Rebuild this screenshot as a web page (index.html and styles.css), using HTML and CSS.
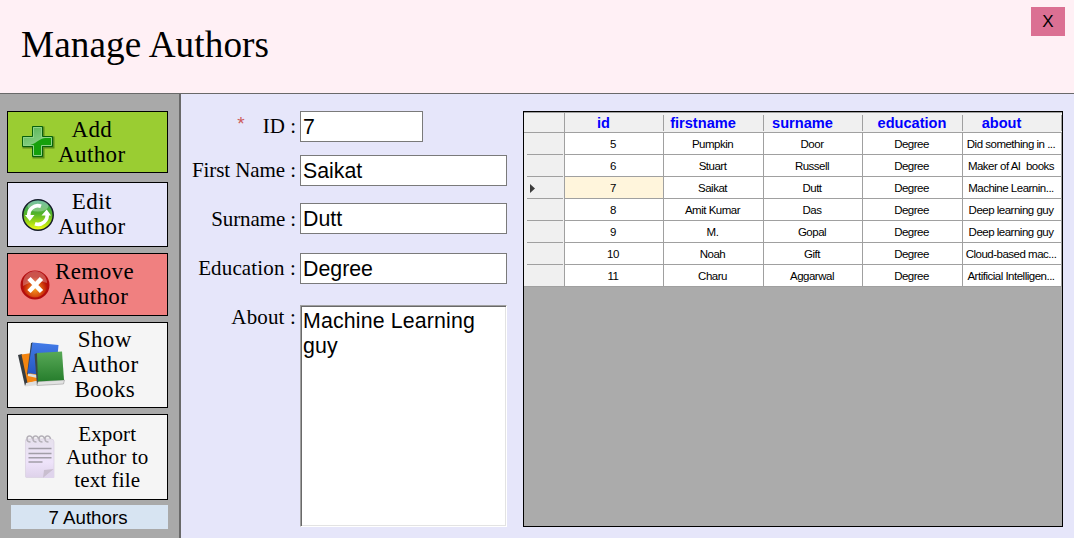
FILE: index.html
```
<!DOCTYPE html>
<html lang="en">
<head>
<meta charset="utf-8">
<title>Manage Authors</title>
<link rel="stylesheet" href="styles.css">
</head>
<body>
<div class="window">
  <header class="header">
    <h1 class="title">Manage Authors</h1>
    <button class="close" type="button">X</button>
  </header>
  <div class="body">
    <nav class="sidebar">
      <button class="action add" type="button">
        <svg class="icon" width="34" height="34" viewBox="0 0 34 34">
          <defs>
            <linearGradient id="plusLight" x1="0" y1="0" x2="0.6" y2="1"><stop offset="0" stop-color="#4fae4f"/><stop offset="1" stop-color="#8fd58a"/></linearGradient>
            <clipPath id="plusClip"><path d="M11.5 1.5h10v10h10v10h-10v10h-10v-10h-10v-10h10z"/></clipPath>
          </defs>
          <path d="M12.5 2.5h10v10h10v10h-10v10h-10v-10h-10v-10h10z" fill="#4c7a16" stroke="#5d8b1c" stroke-width="2"/>
          <path d="M11.500 1.500h10v10h10v10h-10v10h-10v-10h-10v-10h10z" fill="#16a00c"/>
          <path d="M0 0H34V12C22 12 18 15 14 18Q9 21 0 21.500z" fill="url(#plusLight)" clip-path="url(#plusClip)"/>
          <path d="M12.500 2.500h8v10h10v8h-10v10h-8v-10h-10v-8h10z" fill="none" stroke="#8fd488" stroke-width="1"/>
          <path d="M11.500 1.500h10v10h10v10h-10v10h-10v-10h-10v-10h10z" fill="none" stroke="#08600c"/>
        </svg>
        <span class="caption">Add<br>Author</span>
      </button>
      <button class="action edit" type="button">
        <svg class="icon" width="34" height="34" viewBox="0 0 34 34">
          <defs><linearGradient id="ball" x1="0" y1="0" x2="0" y2="1"><stop offset="0" stop-color="#35a37c"/><stop offset=".45" stop-color="#52b32a"/><stop offset=".75" stop-color="#a5dc13"/><stop offset="1" stop-color="#f5ff16"/></linearGradient></defs>
          <circle cx="17" cy="17" r="15.200" fill="url(#ball)" stroke="#161d2a" stroke-width="1.500"/>
          <ellipse cx="17" cy="8" rx="10.500" ry="5.500" fill="#fff" opacity=".3"/>
          <path d="M8 18.500A9 9 0 0 1 20 8.300" fill="none" stroke="#fff" stroke-width="3.600"/>
          <path d="M26 15.500A9 9 0 0 1 14 25.700" fill="none" stroke="#fff" stroke-width="3.600"/>
          <path d="M4 17h9.500l-4.700 6zM20.500 17.500h9.500l-4.300-6z" fill="#fff"/>
        </svg>
        <span class="caption">Edit<br>Author</span>
      </button>
      <button class="action remove" type="button">
        <svg class="icon" width="32" height="32" viewBox="0 0 32 32">
          <defs><radialGradient id="ember" cx=".5" cy=".65" r=".45"><stop offset="0" stop-color="#f49a20"/><stop offset=".6" stop-color="#d95010"/><stop offset="1" stop-color="#b81206"/></radialGradient></defs>
          <circle cx="16" cy="16" r="13.500" fill="url(#ember)" stroke="#b40c0c" stroke-width="2"/>
          <path d="M4 14A12 12 0 0 1 28 14Q16 10 4 17z" fill="#fff" opacity=".28"/>
          <path d="M10 9.500l12.500 13M22.500 9.500L10 22.500" stroke="#fff" stroke-width="4.600"/>
        </svg>
        <span class="caption">Remove<br>Author</span>
      </button>
      <button class="action books" type="button">
        <svg class="icon" width="48" height="46" viewBox="0 0 48 46">
          <defs>
            <linearGradient id="green" x1="0" y1="0" x2="0" y2="1"><stop offset="0" stop-color="#58a957"/><stop offset="1" stop-color="#267d2c"/></linearGradient>
            <linearGradient id="blue" x1="0" y1="0" x2="0" y2="1"><stop offset="0" stop-color="#427be8"/><stop offset="1" stop-color="#2454bd"/></linearGradient>
          </defs>
          <path d="M1 13l4-1 7 28-4 4z" fill="#373c40"/>
          <path d="M4.500 12.500l14-2 5 28-13 2.500z" fill="#f48510"/>
          <path d="M9 41l13-2.500v4.500l-14 1.500z" fill="#dedede"/>
          <path d="M14 1l2-.500-3 31-3 1z" fill="#30435b"/>
          <path d="M15.500 .500l26 2.500-3 32-28-4z" fill="url(#blue)"/>
          <path d="M11 31.500l9 1.500v3l-9-2z" fill="#ddd"/>
          <path d="M17.500 12l3-1 1 28-1.500 4.500z" fill="#3c4744"/>
          <path d="M21 39.500l26.500-1.500-1 4-26.500 1.500z" fill="#e2e2e2" stroke="#777" stroke-width=".4"/>
          <path d="M20 11l25-1.500 2 28.500-26 1.500z" fill="url(#green)"/>
        </svg>
        <span class="caption">Show<br>Author<br>Books</span>
      </button>
      <button class="action export" type="button">
        <svg class="icon" width="30" height="44" viewBox="0 0 30 44">
          <defs><linearGradient id="page" x1="0" y1="0" x2="0" y2="1"><stop offset="0" stop-color="#e6e1ed"/><stop offset=".6" stop-color="#eee3fa"/><stop offset="1" stop-color="#ded2ea"/></linearGradient></defs>
          <path d="M1.500 4H26q3 0 3 3V42.500H1.500q-1 0-1-1V5z" fill="url(#page)" stroke="#d8d0df" stroke-width=".7"/>
          <path d="M18 43l1-8 10-1z" fill="#c9becf"/><path d="M18 43l11-9v9z" fill="#dfd4ec"/>
          <g fill="none" stroke="#b5b1b9" stroke-width="1.500"><path d="M7.500 4Q7 1 4.500 1T2 4t3.500 3M13.500 4Q13 1 10.500 1T8 4t3.500 3M19.500 4Q19 1 16.500 1T14 4t3.500 3M25.500 4Q25 1 22.500 1T20 4t3.500 3"/></g>
          <path d="M3.500 13.500h23M3.500 18.500h23M3.500 22.700h23M3.500 27h14" stroke="#a29ea8" stroke-width="1.500"/>
        </svg>
        <span class="caption">Export<br>Author to<br>text file</span>
      </button>
      <div class="count">7 Authors</div>
    </nav>
    <main class="content">
      <form class="form">
        <div class="field field-id"><label for="id"><span class="required">*</span>ID :</label><input id="id" class="short" value="7"></div>
        <div class="field field-first"><label for="first">First Name :</label><input id="first" value="Saikat"></div>
        <div class="field field-surname"><label for="surname">Surname :</label><input id="surname" value="Dutt"></div>
        <div class="field field-education"><label for="education">Education :</label><input id="education" value="Degree"></div>
        <div class="field field-about"><label for="about">About :</label><textarea id="about">Machine Learning guy</textarea></div>
      </form>
      <section class="grid-box">
        <div class="row head"><span class="handle"></span><span>id</span><span>firstname</span><span>surname</span><span class="centered">education</span><span>about</span></div>
        <div class="row"><span class="handle"></span><span>5</span><span>Pumpkin</span><span>Door</span><span>Degree</span><span>Did something in ...</span></div>
        <div class="row"><span class="handle"></span><span>6</span><span>Stuart</span><span>Russell</span><span>Degree</span><span>Maker of AI&nbsp; books</span></div>
        <div class="row"><span class="handle"><svg width="5" height="9" viewBox="0 0 5 9"><path d="M0 0l5 4.500L0 9z" fill="#3c3c3c"/></svg></span><span class="selected">7</span><span>Saikat</span><span>Dutt</span><span>Degree</span><span>Machine Learnin...</span></div>
        <div class="row"><span class="handle"></span><span>8</span><span>Amit Kumar</span><span>Das</span><span>Degree</span><span>Deep learning guy</span></div>
        <div class="row"><span class="handle"></span><span>9</span><span>M.</span><span>Gopal</span><span>Degree</span><span>Deep learning guy</span></div>
        <div class="row"><span class="handle"></span><span>10</span><span>Noah</span><span>Gift</span><span>Degree</span><span>Cloud-based mac...</span></div>
        <div class="row"><span class="handle"></span><span>11</span><span>Charu</span><span>Aggarwal</span><span>Degree</span><span>Artificial Intelligen...</span></div>
      </section>
    </main>
  </div>
</div>
</body>
</html>
```
FILE: styles.css
```
* { box-sizing: border-box; }
body { margin: 0; }
.window {
  width: 1074px; height: 538px; overflow: hidden;
  display: flex; flex-direction: column;
  color: #000; background: #e6e6fa;
  font-family: "Liberation Sans", Arial, sans-serif;
}
.header {
  flex: none; height: 94px; display: flex; justify-content: space-between;
  padding: 7px 9px 0 21px; background: #fff0f5; border-bottom: 1px solid #696969;
}
.title {
  margin: 17px 0 0; font: 400 37.2px/42px "Liberation Serif", "Times New Roman", serif;
  letter-spacing: .09px;
}
.close {
  width: 34px; height: 29px; padding: 0; border: 0; background: #db7093;
  font: 17px/29px "Liberation Sans", Arial, sans-serif; color: #000;
}
.body { flex: 1; display: flex; min-height: 0; }
.sidebar {
  flex: none; width: 181px; padding: 17px 0 0 7px;
  background: #a9a9a9; border-right: 2px solid #696969;
}
.action {
  width: 161px; padding: 0; display: flex; align-items: center;
  border: 1px solid #000; color: #000; background: #f5f5f5;
  font: 23px/25px "Liberation Serif", "Times New Roman", serif; letter-spacing: .4px;
}
.icon { flex: none; display: block; }
.caption { text-align: center; white-space: nowrap; }
.add { height: 62px; margin-bottom: 9px; padding-left: 13px; background: #9acd32; }
.add .caption { margin-left: 3px; }
.edit { height: 65px; margin-bottom: 6px; padding-left: 13px; background: #e6e6fa; }
.edit .caption { margin: -2px 0 0 3px; }
.remove { height: 63px; margin-bottom: 6px; padding-left: 11px; background: #f08080; }
.remove .caption { margin: -2px 0 0 4px; }
.books { height: 86px; margin-bottom: 6px; padding-left: 9px; }
.books .caption { margin: -2px 0 0 6px; }
.export { height: 86px; margin-bottom: 5px; padding-left: 17px; font-size: 21px; line-height: 23px; letter-spacing: .15px; }
.export .caption { margin-left: 11px; }
.count {
  width: 157px; height: 24px; margin-left: 4px; background: #d7e4f2;
  font-size: 18.700px; line-height: 25px; text-align: center;
  padding-right: 3px;
}
.content { flex: 1; display: flex; padding-top: 17px; }
.form { width: 342px; flex: none; }
.field { display: flex; }
.field label {
  width: 119px; padding-right: 4px; text-align: right; white-space: nowrap;
  font: 21px/31px "Liberation Serif", "Times New Roman", serif;
}
.required {
  margin-right: 18px; color: #cd5c5c; vertical-align: 3px;
  font: 19px/20px "Liberation Sans", Arial, sans-serif;
}
.field input, .field textarea {
  width: 207px; height: 31px; margin: 0; padding: 2px 2px 0;
  border: 1px solid #7a7a7a; border-radius: 0; background: #fff; color: #000;
  font: 21.330px/25px "Liberation Sans", Arial, sans-serif; outline: 0;
}
.field .short { width: 123px; }
.field-id { margin-bottom: 13px; }
.field-first { margin-bottom: 17px; }
.field-first label { letter-spacing: -.08px; }
.field-surname { height: 31px; margin-bottom: 19px; }
.field-surname label { padding-top: 1px; letter-spacing: -.1px; }
.field-education { margin-bottom: 21px; }
.field-education label { letter-spacing: .15px; }
.field-about label { line-height: 24px; letter-spacing: .15px; }
.field textarea {
  height: 222px; resize: none; overflow: hidden; padding: 3px 2px;
  border: 1px solid; border-color: #a0a0a0 #fff #fff #a0a0a0;
  box-shadow: inset 1px 1px #696969, inset -1px -1px #e3e3e3;
  letter-spacing: .15px;
}
.grid-box { width: 540px; height: 416px; border: 1px solid #000; background: #ababab; }
.row {
  display: grid; grid-template-columns: 41px 99px 100px 99px 100px 99px;
  grid-template-rows: 100%; width: 538px; height: 22px;
}
.row span {
  background: #fff; border-right: 1px solid #a0a0a0; border-bottom: 1px solid #a0a0a0;
  font-size: 11.500px; line-height: 23px; letter-spacing: -.5px; padding-right: 2px;
  text-align: center; white-space: nowrap;
}
.row .handle { display: flex; align-items: center; padding-left: 6px; background: #f0f0f0; }
.row:not(.head):not(:last-child) .handle {
  border-bottom: 0;
  background: linear-gradient(#a0a0a0, #a0a0a0) 3px 100% / 36px 1px no-repeat #f0f0f0;
}
.row .selected { background: #fff5dc; }
.row.head { height: 21px; border-top: 1px solid #a0a0a0; }
.row.head span {
  color: #00f; font-size: 14.600px; font-weight: 700;
  line-height: 20px; letter-spacing: 0; padding-right: 22px; border-right: 0;
  background: linear-gradient(#a0a0a0, #a0a0a0) 100% 2px / 1px 16px no-repeat #f0f0f0;
}
.row.head .handle { border-right: 1px solid #a0a0a0; background: #f0f0f0; }
.row.head .centered { padding-right: 2px; }
```
